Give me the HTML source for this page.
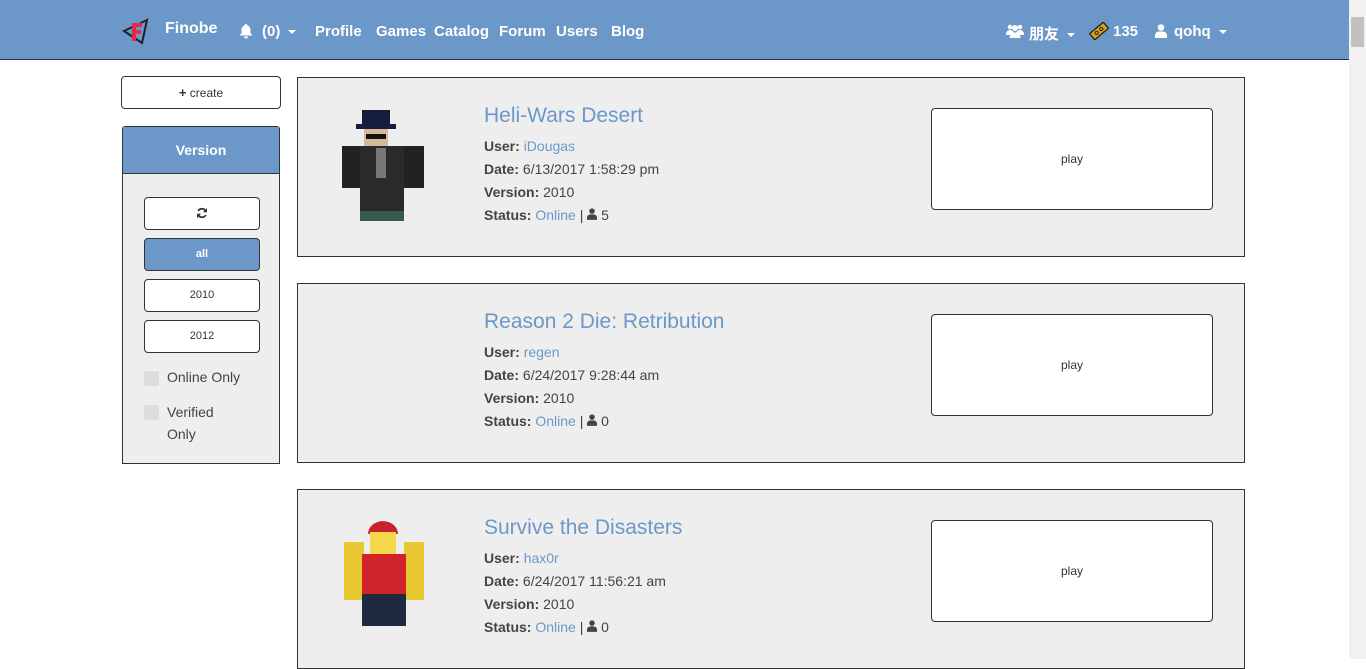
<!DOCTYPE html>
<html><head><meta charset="utf-8"><style>
*{box-sizing:border-box;margin:0;padding:0}
body{width:1366px;height:659px;overflow:hidden;background:#fff;font-family:"Comic Sans MS","Liberation Sans","Noto Sans CJK SC",sans-serif;color:#444;position:relative}
.nav{position:absolute;left:0;top:0;width:1349px;height:60px;background:#6b98c8;border-bottom:1px solid #2a3340;color:#fff;font-weight:bold;font-size:15px}
.nav span{position:absolute;top:23px}
.nav svg{position:absolute}
.sb{position:absolute;right:0;top:0;width:17px;height:659px;background:#f1f1f1}
.sb div{position:absolute;left:2px;top:17px;width:13px;height:30px;background:#c1c1c1}
.btn{position:absolute;background:#fff;border:1px solid #333;border-radius:4px;text-align:center;font-size:11px;color:#333;font-family:"Liberation Sans",sans-serif}
.card{position:absolute;left:297px;width:948px;height:180px;background:#eee;border:1px solid #333}
.card h2{position:absolute;left:186px;top:26px;font-size:21px;font-weight:normal;color:#6b98c8}
.card .info{position:absolute;left:186px;top:57px;font-size:14px;line-height:23px;color:#444}
.card b{font-weight:bold}
.card a{color:#6b98c8}
.play{left:633px;top:30px;width:282px;height:102px;line-height:100px;font-size:12px}
.cb{position:absolute;left:144px;width:15px;height:15px;background:#ddd;border-radius:2px}
.caret{display:inline-block;width:0;height:0;border-left:4px solid transparent;border-right:4px solid transparent;border-top:4px solid #fff;vertical-align:middle;margin-left:8px}
</style></head><body>
<div class="nav">
<svg style="left:122px;top:17px" width="28" height="28" viewBox="0 0 28 28"><path d="M2 14L25 3L20 26Z" fill="none" stroke="#222" stroke-width="2"/><path d="M10 6h10v4h-6v3h5v4h-5v7h-4z" fill="#e8274b"/></svg>
<span style="left:165px;top:20px;font-size:16px">Finobe</span>
<svg style="left:239px;top:24px" width="14" height="15" viewBox="0 0 14 15"><path d="M7 0a1.3 1.3 0 0 1 1.3 1.4C10.5 2 11.5 4 11.5 6.5V9l2 2.5H.5L2.5 9V6.5C2.5 4 3.5 2 5.7 1.4A1.3 1.3 0 0 1 7 0zM5 12.5h4a2 2 0 0 1-4 0z" fill="#fff"/></svg>
<span style="left:262px">(0)<i class="caret"></i></span>
<span style="left:315px">Profile</span>
<span style="left:376px">Games</span>
<span style="left:434px">Catalog</span>
<span style="left:499px">Forum</span>
<span style="left:556px">Users</span>
<span style="left:611px">Blog</span>
<svg style="left:1006px;top:24px" width="18" height="14" viewBox="0 0 18 14"><circle cx="4" cy="3" r="2.3" fill="#fff"/><circle cx="14" cy="3" r="2.3" fill="#fff"/><circle cx="9" cy="4" r="3" fill="#fff"/><path d="M0 10a4 4 0 0 1 8 0v1H0zM10 10a4 4 0 0 1 8 0v1h-8z" fill="#fff"/><path d="M3.5 14a5.5 5.5 0 0 1 11 0z" fill="#fff"/></svg>
<span style="left:1029px">朋友<i class="caret"></i></span>
<svg style="left:1089px;top:22px" width="20" height="18" viewBox="0 0 20 18"><g transform="rotate(-40 10 9)"><rect x="1" y="5" width="18" height="8" fill="#d4a017" stroke="#222" stroke-width="1.3"/><circle cx="7" cy="9" r="1.6" fill="none" stroke="#222"/><circle cx="13" cy="9" r="1.6" fill="none" stroke="#222"/></g></svg>
<span style="left:1113px">135</span>
<svg style="left:1155px;top:24px" width="12" height="14" viewBox="0 0 12 14"><circle cx="6" cy="3.5" r="3.3" fill="#fff"/><path d="M0 14v-2.5A4 4 0 0 1 4 7.5h4a4 4 0 0 1 4 4V14z" fill="#fff"/></svg>
<span style="left:1174px">qohq<i class="caret"></i></span>
</div>
<div class="sb"><div></div></div>

<div class="btn" style="left:121px;top:76px;width:160px;height:33px;line-height:31px;font-size:12px"><b style="font-size:13px">+</b> create</div>
<div style="position:absolute;left:122px;top:126px;width:158px;height:338px;background:#eee;border:1px solid #333;border-radius:3px 3px 0 0">
<div style="height:47px;background:#6b98c8;border-bottom:1px solid #333;color:#fff;font-weight:bold;text-align:center;line-height:46px;font-size:14px">Version</div>
</div>
<div class="btn" style="left:144px;top:197px;width:116px;height:33px;line-height:31px"><svg width="12" height="12" viewBox="0 0 12 12" style="vertical-align:middle"><path d="M10 4.5A4.3 4.3 0 0 0 2.2 4M2 7.5A4.3 4.3 0 0 0 9.8 8" fill="none" stroke="#333" stroke-width="1.8"/><path d="M11 1v4.2H6.8zM1 11V6.8h4.2z" fill="#333"/></svg></div>
<div class="btn" style="left:144px;top:238px;width:116px;height:33px;line-height:31px;background:#6b98c8;color:#fff;font-weight:bold">all</div>
<div class="btn" style="left:144px;top:279px;width:116px;height:33px;line-height:31px">2010</div>
<div class="btn" style="left:144px;top:320px;width:116px;height:33px;line-height:31px">2012</div>
<div class="cb" style="top:371px"></div><div style="position:absolute;left:167px;top:369px;font-size:14px">Online Only</div>
<div class="cb" style="top:405px"></div><div style="position:absolute;left:167px;top:401px;font-size:14px;line-height:22px">Verified<br>Only</div>

<div class="card" style="top:77px">
<svg style="position:absolute;left:42px;top:28px" width="90" height="118" viewBox="0 0 90 118"><rect x="22" y="4" width="28" height="18" fill="#141e3c"/><rect x="16" y="18" width="40" height="5" fill="#141e3c"/><rect x="24" y="23" width="24" height="20" fill="#d8b89a"/><rect x="26" y="28" width="20" height="5" fill="#111"/><rect x="2" y="40" width="82" height="42" fill="#222"/><rect x="20" y="40" width="44" height="75" fill="#2a2a2a"/><rect x="36" y="42" width="10" height="30" fill="#777"/><rect x="20" y="105" width="44" height="10" fill="#3a5a50"/></svg>
<h2>Heli-Wars Desert</h2>
<div class="info"><b>User:</b> <a>iDougas</a><br><b>Date:</b> 6/13/2017 1:58:29 pm<br><b>Version:</b> 2010<br><b>Status:</b> <a>Online</a> | <svg width="10" height="12" viewBox="0 0 12 14"><circle cx="6" cy="3.5" r="3.3" fill="#444"/><path d="M0 14v-2.5A4 4 0 0 1 4 7.5h4a4 4 0 0 1 4 4V14z" fill="#444"/></svg> 5</div>
<div class="btn play">play</div>
</div>
<div class="card" style="top:283px">
<h2>Reason 2 Die: Retribution</h2>
<div class="info"><b>User:</b> <a>regen</a><br><b>Date:</b> 6/24/2017 9:28:44 am<br><b>Version:</b> 2010<br><b>Status:</b> <a>Online</a> | <svg width="10" height="12" viewBox="0 0 12 14"><circle cx="6" cy="3.5" r="3.3" fill="#444"/><path d="M0 14v-2.5A4 4 0 0 1 4 7.5h4a4 4 0 0 1 4 4V14z" fill="#444"/></svg> 0</div>
<div class="btn play">play</div>
</div>
<div class="card" style="top:489px">
<svg style="position:absolute;left:44px;top:30px" width="86" height="108" viewBox="0 0 86 108"><path d="M26 14a14 12 0 0 1 30 0z" fill="#c8232c"/><rect x="28" y="12" width="26" height="22" fill="#f5d84a"/><rect x="2" y="22" width="20" height="58" fill="#e8c830"/><rect x="62" y="22" width="20" height="58" fill="#e8c830"/><rect x="20" y="34" width="44" height="40" fill="#d0242a"/><rect x="20" y="74" width="44" height="32" fill="#1d2a40"/></svg>
<h2>Survive the Disasters</h2>
<div class="info"><b>User:</b> <a>hax0r</a><br><b>Date:</b> 6/24/2017 11:56:21 am<br><b>Version:</b> 2010<br><b>Status:</b> <a>Online</a> | <svg width="10" height="12" viewBox="0 0 12 14"><circle cx="6" cy="3.5" r="3.3" fill="#444"/><path d="M0 14v-2.5A4 4 0 0 1 4 7.5h4a4 4 0 0 1 4 4V14z" fill="#444"/></svg> 0</div>
<div class="btn play">play</div>
</div>
</body></html>
